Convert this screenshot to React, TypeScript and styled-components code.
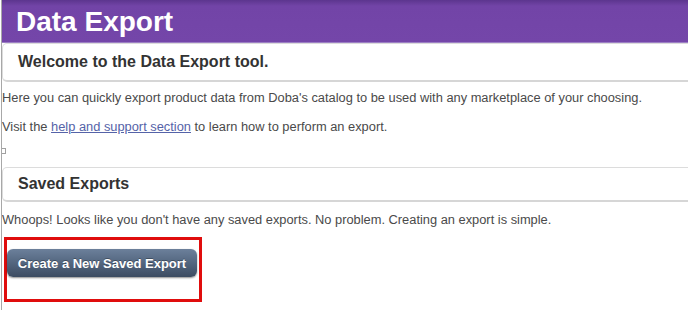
import styled, { createGlobalStyle } from "styled-components";

const GlobalStyle = createGlobalStyle`
  html, body {
    margin: 0;
    padding: 0;
    background: #ffffff;
  }
  body {
    font-family: "Liberation Sans", Arial, sans-serif;
  }
`;

const Page = styled.div`
  width: 686px;
  height: 310px;
  margin-left: 1px;
  border-left: 1px solid #a8a8a8;
  overflow: hidden;
  display: flex;
  flex-direction: column;
`;

const Header = styled.header`
  height: 42px;
  border-bottom: 1px solid #9c7fc4;
  background: linear-gradient(to bottom, #5c358e 0px, #7244a7 6px, #7446a9 100%);
  display: flex;
  align-items: center;
  padding-left: 14px;
`;

const Title = styled.h1`
  margin: 0;
  padding-top: 2px;
  font-size: 28px;
  font-weight: bold;
  color: #ffffff;
`;

const SectionBox = styled.div<{ $height: number; $top?: number }>`
  height: ${(p) => p.$height}px;
  margin-top: ${(p) => p.$top ?? 0}px;
  box-sizing: border-box;
  margin-right: -8px;
  border: 1px solid #dcdcdc;
  border-bottom: 2px solid #d6d6d6;
  border-radius: 5px;
  background: #ffffff;
  display: flex;
  align-items: center;
  padding-left: 15px;
`;

const SectionTitle = styled.h2`
  margin: 0;
  font-size: 16px;
  font-weight: bold;
  color: #333333;
`;

const Text = styled.p<{ $top: number }>`
  margin: ${(p) => p.$top}px 0 0 0;
  font-size: 12.85px;
  line-height: 16px;
  color: #4a4a4a;
`;

const Link = styled.a`
  color: #5563a8;
  text-decoration: underline;
`;

const Marker = styled.span`
  display: block;
  width: 4px;
  height: 4px;
  margin: 13px 0 0 -2px;
  border: 1px solid #a0a0a0;
  background: #ffffff;
`;

const Highlight = styled.div`
  align-self: flex-start;
  margin: 9px 0 0 2px;
  padding: 9px 2px 22px 0;
  border: 3px solid #e00d0d;
`;

const Button = styled.button`
  display: block;
  height: 28px;
  width: 190px;
  border: none;
  border-radius: 6px;
  background: linear-gradient(to bottom, #6c809b 0%, #53667f 50%, #3c4b61 100%);
  box-shadow: 0 1px 2px rgba(0, 0, 0, 0.45);
  color: #ffffff;
  font-family: "Liberation Sans", Arial, sans-serif;
  font-size: 13px;
  font-weight: bold;
  text-shadow: 0 -1px 0 rgba(0, 0, 0, 0.3);
  padding: 0;
  cursor: pointer;
`;

export default function App() {
  return (
    <>
      <GlobalStyle />
      <Page>
        <Header>
          <Title>Data Export</Title>
        </Header>
        <SectionBox $height={39}>
          <SectionTitle>Welcome to the Data Export tool.</SectionTitle>
        </SectionBox>
        <Text $top={8}>
          Here you can quickly export product data from Doba's catalog to be used with any
          marketplace of your choosing.
        </Text>
        <Text $top={13}>
          Visit the <Link href="#">help and support section</Link> to learn how to perform an
          export.
        </Text>
        <Marker />
        <SectionBox $height={35} $top={13}>
          <SectionTitle>Saved Exports</SectionTitle>
        </SectionBox>
        <Text $top={10}>
          Whoops! Looks like you don't have any saved exports. No problem. Creating an export is
          simple.
        </Text>
        <Highlight>
          <Button>Create a New Saved Export</Button>
        </Highlight>
      </Page>
    </>
  );
}
